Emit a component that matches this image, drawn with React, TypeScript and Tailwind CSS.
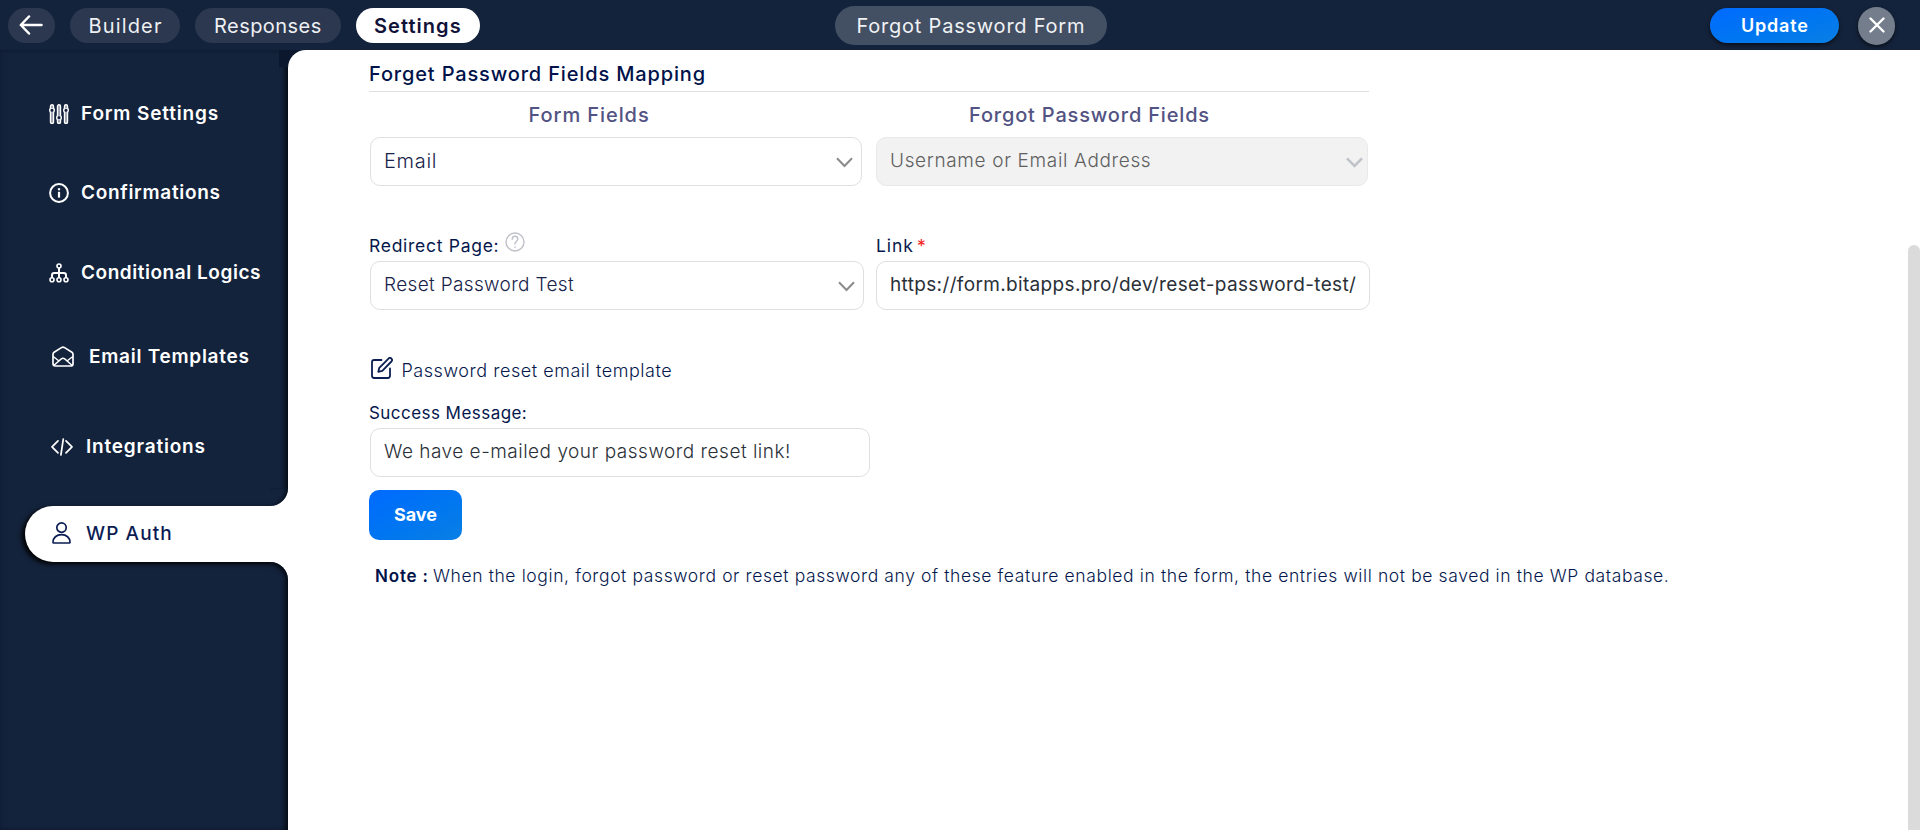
import type { ReactNode } from "react";

type IconProps = { className?: string };

function BackArrow() {
  return (
    <svg width="24" height="20" viewBox="0 0 24 20" fill="none" stroke="#fff" strokeWidth="2.500" strokeLinecap="round" strokeLinejoin="round">
      <path d="M22.500 10H2M10 1.500 1.800 10l8.200 8.500" />
    </svg>
  );
}

function CloseIcon() {
  return (
    <svg width="16" height="16" viewBox="0 0 16 16" fill="none" stroke="#fff" strokeWidth="2.400" strokeLinecap="round">
      <path d="M1.500 1.500 14.500 14.500M14.500 1.500 1.500 14.500" />
    </svg>
  );
}

function SlidersIcon({ className }: IconProps) {
  return (
    <svg className={className} width="20" height="20" viewBox="0 0 20 20" fill="none" stroke="currentColor" strokeWidth="1.400">
      <circle cx="3" cy="6.300" r="2.300" />
      <circle cx="10" cy="13.700" r="2.300" />
      <circle cx="17" cy="6.300" r="2.300" />
      <g fill="#8b94a3">
        <path d="M1.500 4.300V2.200a1.500 1.500 0 0 1 3 0v2.100M1.500 8.300V18a1.500 1.500 0 0 0 3 0V8.300" />
        <path d="M8.500 11.700V2.200a1.500 1.500 0 0 1 3 0v9.500M8.500 15.700V18a1.500 1.500 0 0 0 3 0v-2.300" />
        <path d="M15.500 4.300V2.200a1.500 1.500 0 0 1 3 0v2.100M15.500 8.300V18a1.500 1.500 0 0 0 3 0V8.300" />
      </g>
    </svg>
  );
}

function InfoIcon({ className }: IconProps) {
  return (
    <svg className={className} width="20" height="20" viewBox="0 0 20 20" fill="none" stroke="currentColor" strokeWidth="2">
      <circle cx="10" cy="10" r="8.900" />
      <path d="M10 8.800v5.800" strokeWidth="2.200" />
      <path d="M10 5.200v2.100" strokeWidth="2.200" />
    </svg>
  );
}

function FlowIcon({ className }: IconProps) {
  return (
    <svg className={className} width="20" height="20" viewBox="0 0 20 20" fill="none" stroke="currentColor" strokeWidth="1.600">
      <circle cx="10" cy="3" r="2" />
      <circle cx="3" cy="16.800" r="2" />
      <circle cx="10" cy="16.800" r="2" />
      <circle cx="17" cy="16.800" r="2" />
      <path d="M10 5v9.800M3 14.800v-2.600Q3 10 5.200 10h9.600Q17 10 17 12.200v2.600" strokeWidth="2" />
    </svg>
  );
}

function EnvelopeIcon({ className }: IconProps) {
  return (
    <svg className={className} width="22" height="21" viewBox="0 0 22 21" fill="none" stroke="currentColor" strokeWidth="1.700" strokeLinejoin="round">
      <path d="M1 8.300Q1 7 2.100 6.200L9.800 1.400Q11 .7 12.200 1.400L19.900 6.200Q21 7 21 8.300V17.700Q21 20 18.700 20H3.300Q1 20 1 17.700Z" />
      <path d="M1.200 10.500 7 15M20.800 10.500 15 15M2 19.300 9.300 12.900Q11 11.600 12.700 12.900L20 19.300" strokeWidth="1.400" />
    </svg>
  );
}

function CodeIcon({ className }: IconProps) {
  return (
    <svg className={className} width="22" height="18" viewBox="0 0 22 18" fill="none" stroke="currentColor" strokeWidth="1.700" strokeLinecap="round" strokeLinejoin="round">
      <path d="M7 2.800 1 8.800l6 6M15 2.800l6 6-6 6M12.300 1 9.900 17" />
    </svg>
  );
}

function UserIcon({ className }: IconProps) {
  return (
    <svg className={className} width="19" height="22" viewBox="0 0 19 22" fill="none" stroke="currentColor" strokeWidth="1.700" strokeLinejoin="round">
      <circle cx="9.500" cy="5.600" r="4.700" />
      <path d="M1 20.200C1 15.700 4.600 12.700 9.500 12.700S18 15.700 18 20.200Q18 21 17.200 21H1.800Q1 21 1 20.200Z" />
    </svg>
  );
}

function EditIcon() {
  return (
    <svg width="22" height="22" viewBox="0 0 22 22" fill="none" stroke="#0c1f52" strokeWidth="1.800" strokeLinecap="round" strokeLinejoin="round">
      <path d="M10.500 3H3.200Q1 3 1 5.200V18.800Q1 21 3.200 21H16.800Q19 21 19 18.800V11.500" />
      <path d="M17.500 1.600a1.980 1.980 0 0 1 2.900 2.900L11.300 13.800 7.300 14.800l1-4Z" />
    </svg>
  );
}

function HelpIcon() {
  return (
    <svg width="20" height="20" viewBox="0 0 20 20" fill="none" stroke="#bfc1c8" strokeWidth="1.400" strokeLinecap="round">
      <circle cx="10" cy="10" r="9" />
      <path d="M7.200 7.300C7.200 5.300 8.400 4.300 10 4.300s2.800 1 2.800 2.700c0 2.200-2.800 2.300-2.800 5M10 14.900v.5" />
    </svg>
  );
}

function Chevron({ className, bold }: { className: string; bold?: boolean }) {
  return (
    <svg className={className} width="17" height="11" viewBox="0 0 17 11" fill="none" stroke="currentColor" strokeWidth={bold ? 2.6 : 2}>
      <path d="M1 1.300 8.500 9 16 1.300" />
    </svg>
  );
}

type NavEntry = {
  label: string;
  icon: ReactNode;
  rowClass: string;
  textClass: string;
};

const navEntries: NavEntry[] = [
  { label: "Form Settings", icon: <SlidersIcon />, rowClass: "pl-[49px]", textClass: "pl-[12px] tracking-[0.84px]" },
  { label: "Confirmations", icon: <InfoIcon />, rowClass: "mt-[23px] pl-[49px]", textClass: "pl-[12px] tracking-[0.685px]" },
  { label: "Conditional Logics", icon: <FlowIcon />, rowClass: "mt-[24px] pl-[49px]", textClass: "pl-[12px] tracking-[0.541px]" },
  { label: "Email Templates", icon: <EnvelopeIcon />, rowClass: "mt-[28px] pl-[52px]", textClass: "pl-[15px] tracking-[0.739px]" },
  { label: "Integrations", icon: <CodeIcon />, rowClass: "mt-[34px] pl-[51px]", textClass: "pl-[13px] tracking-[0.802px]" },
];

function Header() {
  return (
    <header className="flex h-[50px] shrink-0 items-center bg-[#14233c] pt-px pl-2 text-[20px] text-white">
      <button className="flex h-[35px] w-[47px] items-center justify-center rounded-full bg-[#2c3850] pr-px pb-px">
        <BackArrow />
      </button>
      <button className="ml-[15px] h-[35px] w-[110px] rounded-full bg-[#2c3850] pl-[18.5px] text-left tracking-[1.15px] text-[#eef0f3]">Builder</button>
      <button className="ml-[15px] h-[35px] w-[146px] rounded-full bg-[#2c3850] pl-[19px] text-left tracking-[0.45px] text-[#eef0f3]">Responses</button>
      <button className="ml-[15px] h-[35px] w-[124px] rounded-full bg-white pl-[18px] text-left font-semibold tracking-[1.05px] text-[#111238]">Settings</button>
      <div className="ml-[355px] flex h-[39px] w-[272px] items-center rounded-full bg-[#434f63] pl-[21.5px] tracking-[0.78px] text-[#f0f2f4]">
        Forgot Password Form
      </div>
      <button className="ml-[603px] h-[35px] w-[129px] rounded-full bg-linear-to-br from-[#006aff] to-[#0a7fe4] pl-[31px] text-left text-[18px] font-semibold tracking-[0.8px] shadow-[0_2px_4px_rgba(0,0,0,0.6)]">
        Update
      </button>
      <button className="ml-[19px] flex h-[38px] w-[37px] items-center justify-center rounded-full bg-[#747d8b] pb-px shadow-[0_2px_4px_rgba(0,0,0,0.6)]">
        <CloseIcon />
      </button>
    </header>
  );
}

function Sidebar() {
  return (
    <nav className="relative flex w-72 shrink-0 flex-col bg-[#14233c] pt-[36px] text-[19px] text-white shadow-[inset_-5px_0_5px_-2px_#050b14,inset_3px_0_5px_-2px_#101c38]">
      <div className="absolute top-0 right-0 h-[17px] w-[9px] bg-[#0a172c]" />
      {navEntries.map((entry) => (
        <div key={entry.label} className={`flex h-14 shrink-0 items-center font-semibold ${entry.rowClass}`}>
          <span className="pb-px">{entry.icon}</span>
          <span className={`whitespace-nowrap ${entry.textClass}`}>{entry.label}</span>
        </div>
      ))}
      <div className="relative mt-[31px] ml-[25px] flex h-14 shrink-0 items-center rounded-l-full bg-white pl-[27px] font-medium text-[#0b1c54] shadow-[-3px_2px_5px_#000]">
        <div className="absolute -top-[18px] right-0 h-[18px] w-[18px] overflow-hidden bg-white">
          <div className="h-full w-full rounded-br-[18px] bg-[#14233c] shadow-[inset_-4px_0_4px_-2px_#050b14]" />
        </div>
        <div className="absolute right-0 -bottom-[18px] h-[18px] w-[18px] overflow-hidden bg-white">
          <div className="h-full w-full rounded-tr-[18px] bg-[#14233c] shadow-[inset_-3px_3px_4px_-1px_#050b14]" />
        </div>
        <span className="pb-[3px]"><UserIcon /></span>
        <span className="pl-[15px] tracking-[1.1px]">WP Auth</span>
      </div>
    </nav>
  );
}

const fieldBase = "flex h-[49px] items-center rounded-[10px] border pb-px pl-[13px] text-[19px] whitespace-nowrap";

function MappingForm() {
  return (
    <main className="flex min-w-0 grow flex-col items-start bg-white pl-[81px] text-[#05184d]">
      <h2 className="h-[42px] w-[1000px] border-b border-[#dfdfe1] pt-2 text-[20px] leading-[33px] font-medium tracking-[0.84px] text-[#00124a]">
        Forget Password Fields Mapping
      </h2>
      <div className="flex h-[45px] items-center text-[20px] font-medium text-[#525383]">
        <span className="w-[440px] pl-[159.5px] tracking-[0.92px]">Form Fields</span>
        <span className="pl-[160px] tracking-[0.82px]">Forgot Password Fields</span>
      </div>
      <div className="ml-px flex gap-[14px]">
        <div className={`${fieldBase} w-[492px] justify-between border-[#dfdfe1] pr-[8px] font-light text-[#17234a]`}>
          <span className="text-[20px] tracking-[0.7px]">Email</span>
          <Chevron className="mt-0.5 text-[#8b8b8b]" />
        </div>
        <div className={`${fieldBase} w-[492px] justify-between border-[#e9e9e9] bg-[#f2f2f2] pr-[4px] font-light text-[#606060]`}>
          <span className="tracking-[0.65px]">Username or Email Address</span>
          <Chevron className="mt-0.5 text-[#bfc3c9]" bold />
        </div>
      </div>

      <div className="mt-[46px] flex gap-[13px]">
        <div className="w-[494px]">
          <div className="flex h-[29px] items-start">
            <span className="w-[136px] pt-1 text-[17.5px] leading-5 tracking-[0.72px]">Redirect Page:</span>
            <HelpIcon />
          </div>
          <div className={`${fieldBase} ml-px w-[494px] justify-between border-[#dfdfe1] pr-[8px] font-light text-[#17234a]`}>
            <span className="tracking-[0.348px]">Reset Password Test</span>
            <Chevron className="mt-0.5 text-[#8b8b8b]" />
          </div>
        </div>
        <div>
          <div className="flex h-[29px] items-start pt-1 text-[17.5px] leading-5">
            <span className="tracking-[0.95px]">Link</span>
            <span className="pl-[3px] text-[#f11f1f]">*</span>
          </div>
          <div className={`${fieldBase} w-[494px] border-[#dfdfe1] text-[#2a3038]`}>
            <span className="tracking-[0.349px]">https://form.bitapps.pro/dev/reset-password-test/</span>
          </div>
        </div>
      </div>

      <div className="mt-[46px] ml-[2px] flex h-7 items-center">
        <span className="-mt-1"><EditIcon /></span>
        <span className="pl-[8.5px] text-[18px] font-light tracking-[0.54px]">Password reset email template</span>
      </div>

      <label className="mt-[19px] text-[17px] leading-5 tracking-[0.45px]">Success Message:</label>
      <div className={`${fieldBase} mt-[5px] ml-px w-[500px] border-[#dfdfe1] font-light text-[#2a3038]`}>
        <span className="tracking-[0.499px]">We have e-mailed your password reset link!</span>
      </div>
      <button className="mt-[13px] h-[50px] w-[93px] rounded-[10px] bg-linear-to-br from-[#006aff] to-[#0a7fe4] pb-0.5 text-[18px] font-bold text-white">
        Save
      </button>
      <p className="mt-6 pl-[6px] text-[17.5px] leading-6 font-light whitespace-nowrap">
        <strong className="inline-block w-[58px] text-[17px] font-semibold tracking-[0.814px] text-[#00124a]">Note :</strong>
        <span className="tracking-[0.61px]">
          When the login, forgot password or reset password any of these feature enabled in the form, the entries will not be saved in the WP database.
        </span>
      </p>
    </main>
  );
}

export default function App() {
  return (
    <div className="flex h-[830px] w-[1920px] flex-col overflow-hidden bg-[#14233c] font-['Inter','Liberation_Sans',sans-serif]">
      <Header />
      <div className="flex min-h-0 grow">
        <Sidebar />
        <div className="relative z-10 flex min-w-0 grow">
          <div className="absolute top-0 left-0 h-[18px] w-[18px] bg-[#0a172c]">
            <div className="h-full w-full rounded-tl-[18px] bg-white" />
          </div>
          <MappingForm />
          <div className="flex w-3 shrink-0 flex-col bg-white pt-[195px]">
            <div className="grow rounded-t-full bg-[#dbdbdb]" />
          </div>
        </div>
      </div>
    </div>
  );
}
